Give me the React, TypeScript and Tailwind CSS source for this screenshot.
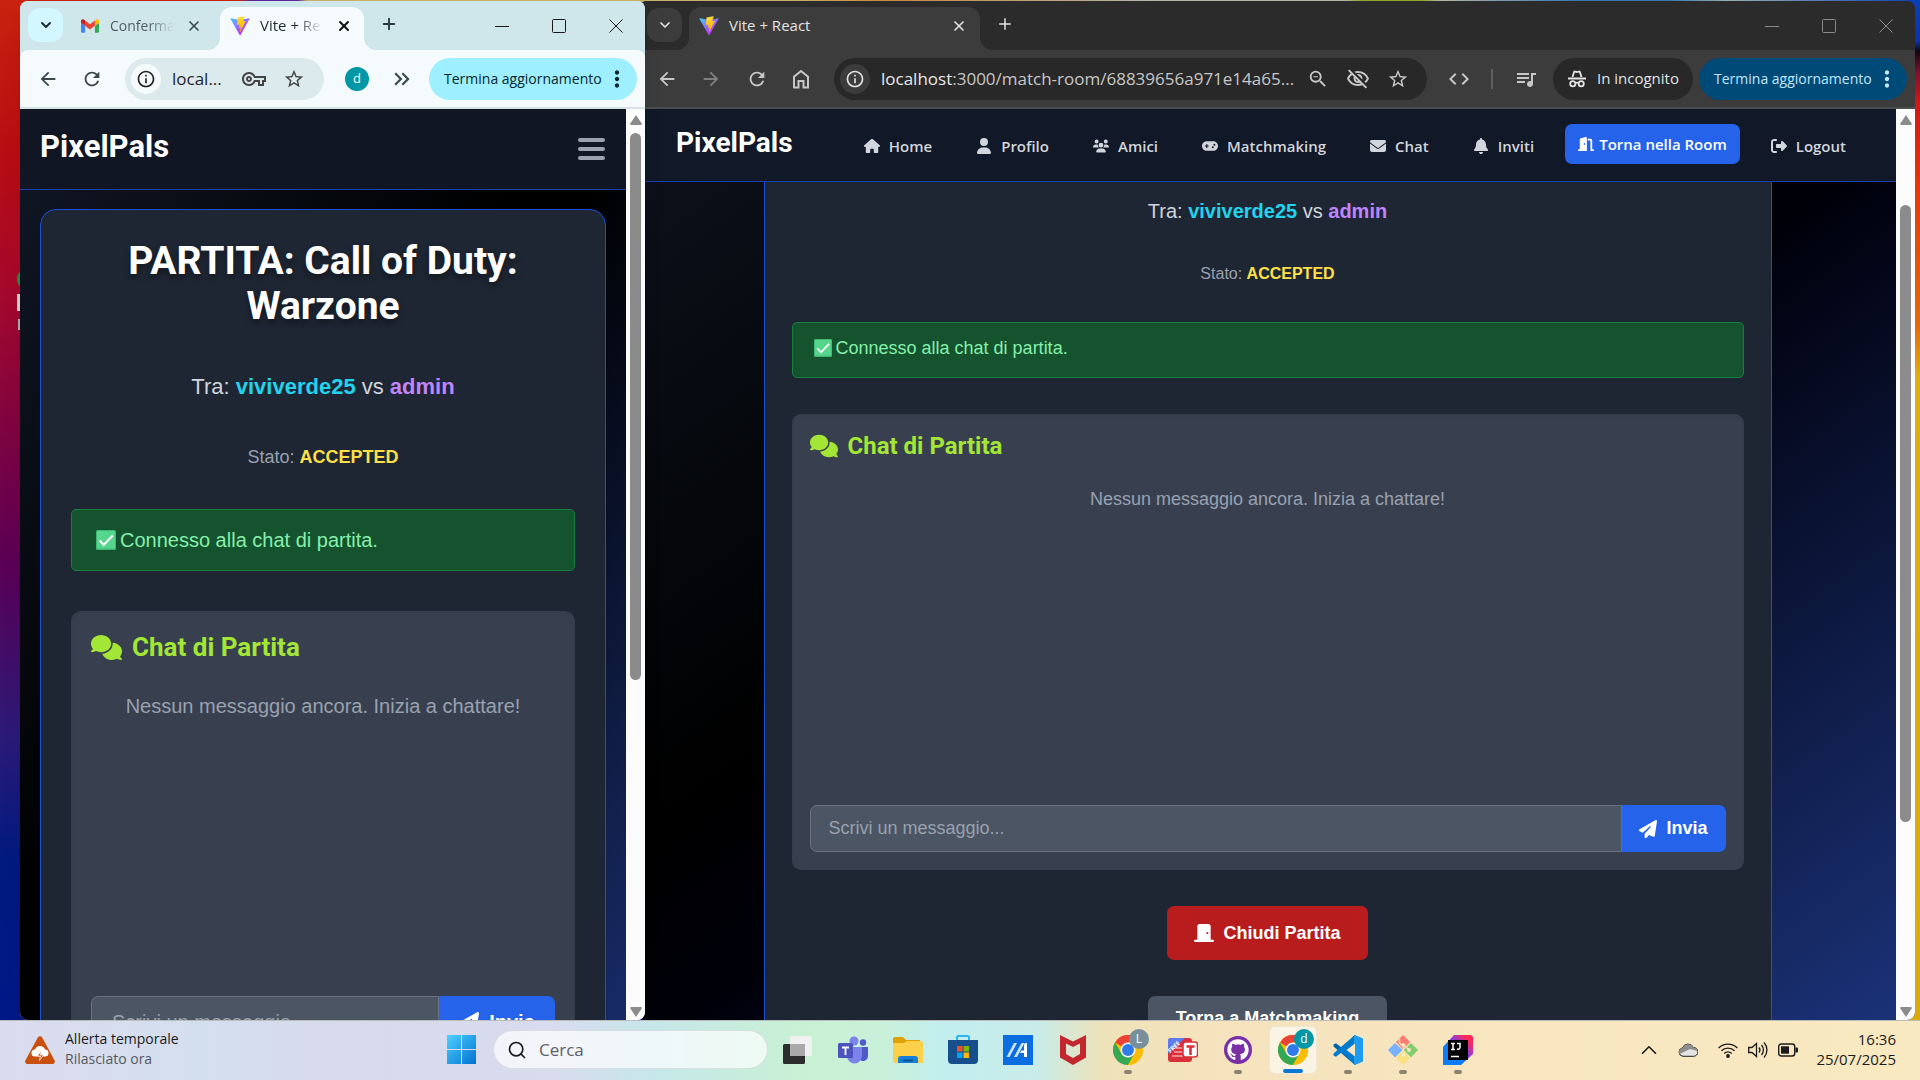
import React from "react";
import {
  FaBell,
  FaComments,
  FaDoorClosed,
  FaDoorOpen,
  FaEnvelope,
  FaGamepad,
  FaGithub,
  FaHouse,
  FaPaperPlane,
  FaRightFromBracket,
  FaUser,
  FaUsers,
} from "react-icons/fa6";
import {
  MdArrowBack,
  MdArrowForward,
  MdCode,
  MdInfoOutline,
  MdKeyboardDoubleArrowRight,
  MdMoreVert,
  MdOutlineVpnKey,
  MdOutlineVisibilityOff,
  MdQueueMusic,
  MdRefresh,
  MdStarOutline,
  MdZoomOut,
} from "react-icons/md";
import { ChevronDown, ChevronUp, Plus, Search, X } from "lucide-react";

function ViteLogo() {
  return (
    <svg viewBox="0 0 410 404" className="h-5 w-5 shrink-0" aria-hidden="true">
      <defs>
        <linearGradient id="viteA" x1="6" y1="33" x2="235" y2="344" gradientUnits="userSpaceOnUse">
          <stop stopColor="#41D1FF" />
          <stop offset="1" stopColor="#BD34FE" />
        </linearGradient>
        <linearGradient id="viteB" x1="194" y1="9" x2="236" y2="293" gradientUnits="userSpaceOnUse">
          <stop stopColor="#FFEA83" />
          <stop offset="0.08" stopColor="#FFDD35" />
          <stop offset="1" stopColor="#FFA800" />
        </linearGradient>
      </defs>
      <path
        d="M399.6 59.5 215.6 388.5c-3.8 6.8-13.6 6.8-17.4.1L10.6 59.6C6.4 52.2 12.700 43.300 21.100 44.800l184.200 32.900c1.200.2 2.400.2 3.500 0l180.400-32.900c8.400-1.500 14.700 7.300 10.400 14.700Z"
        fill="url(#viteA)"
      />
      <path
        d="M293 1.600 156.800 28.300c-2.200.4-3.900 2.300-4 4.600l-8.400 141.400c-.2 3.300 2.900 5.900 6.100 5.200l37.900-8.800c3.500-.8 6.700 2.300 6 5.900l-11.300 55.100c-.8 3.700 2.700 6.900 6.300 5.800l23.400-7.100c3.600-1.100 7.100 2.100 6.300 5.800l-17.900 86.600c-1.100 5.400 6.100 8.400 9.100 3.700l2-3.100 110.900-221.400c1.900-3.700-1.300-7.900-5.400-7.100l-39 7.500c-3.700.7-6.800-2.700-5.700-6.300l25.500-88.200c1-3.600-2.100-7-5.600-6.300Z"
        fill="url(#viteB)"
      />
    </svg>
  );
}

function GmailLogo() {
  return (
    <svg viewBox="52 42 88 66" className="h-3.5 w-[18px] shrink-0" aria-hidden="true">
      <path fill="#4285f4" d="M58 108h14V74L52 59v43c0 3.300 2.700 6 6 6" />
      <path fill="#34a853" d="M120 108h14c3.300 0 6-2.700 6-6V59l-20 15" />
      <path fill="#fbbc04" d="M120 48v26l20-15v-8c0-7.400-8.500-11.600-14.400-7.200" />
      <path fill="#ea4335" d="M72 74V48l24 18 24-18v26L96 92" />
      <path fill="#c5221f" d="M52 51v8l20 15V48l-5.600-4.200C60.500 39.400 52 43.600 52 51" />
    </svg>
  );
}

function IncognitoIcon() {
  return (
    <svg viewBox="0 0 20 20" className="h-5 w-5 shrink-0" fill="none" stroke="currentColor" aria-hidden="true">
      <path d="M5.500 8 7 3.200c.2-.6.700-.8 1.300-.6L10 3l1.700-.4c.6-.2 1.100 0 1.300.6L14.500 8" strokeWidth="1.800" />
      <path d="M1 9.500h18" strokeWidth="1.900" />
      <circle cx="5.800" cy="14.800" r="2.600" strokeWidth="1.800" />
      <circle cx="14.200" cy="14.800" r="2.600" strokeWidth="1.800" />
      <path d="M8.200 14.200c1-.7 2.600-.7 3.600 0" strokeWidth="1.600" />
    </svg>
  );
}

function WindowButtons({ dim }: { dim?: boolean }) {
  return (
    <div className={dim ? "mr-px flex text-[#8a8a8a]" : "mr-px flex text-[#1a1a1a]"}>
      <button aria-label="Riduci a icona" className="flex h-8 w-[57px] items-center justify-center">
        <svg viewBox="0 0 14 14" className="h-3.5 w-3.5" stroke="currentColor" aria-hidden="true">
          <path d="M0 7.500h14" />
        </svg>
      </button>
      <button aria-label="Ingrandisci" className="flex h-8 w-[57px] items-center justify-center">
        <svg viewBox="0 0 14 14" className="h-3.5 w-3.5" fill="none" stroke="currentColor" aria-hidden="true">
          <rect x="0.500" y="0.500" width="13" height="13" rx="1" />
        </svg>
      </button>
      <button aria-label="Chiudi" className="flex h-8 w-[57px] items-center justify-center">
        <svg viewBox="0 0 14 14" className="h-3.5 w-3.5" stroke="currentColor" aria-hidden="true">
          <path d="M.5.5l13 13M13.500.5l-13 13" />
        </svg>
      </button>
    </div>
  );
}

function Scrollbar({ thumb }: { thumb: string }) {
  return (
    <div className="flex w-[19px] shrink-0 flex-col items-center bg-[#fcfcfc] pt-1.5 pb-[3px]" aria-hidden="true">
      <svg viewBox="0 0 12 10" className="h-2.5 w-3 shrink-0" fill="#8b8b8b">
        <path d="M6 0 12 9 11 10H1L0 9Z" />
      </svg>
      <div className="flex min-h-0 w-full flex-1 flex-col items-center">
        <div className={thumb} />
      </div>
      <svg viewBox="0 0 12 10" className="h-2.5 w-3 shrink-0" fill="#8b8b8b">
        <path d="M6 10 12 1 11 0H1L0 1Z" />
      </svg>
    </div>
  );
}

type Size = "lg" | "md";

function Players({ size }: { size: Size }) {
  return (
    <>
      <p className={size === "lg" ? "text-center text-[22px] leading-8 text-gray-300" : "text-center text-[20px] leading-7 text-gray-300"}>
        Tra: <strong className="text-[#22d3ee]">viviverde25</strong> vs <strong className="text-[#c084fc]">admin</strong>
      </p>
      <p
        className={
          size === "lg"
            ? "mt-[42px] text-center text-[18px] leading-6 text-gray-400"
            : "mt-[37px] text-center text-[16px] leading-6 text-gray-400"
        }
      >
        Stato: <strong className="text-[#fde047]">ACCEPTED</strong>
      </p>
    </>
  );
}

function ConnectedAlert({ size }: { size: Size }) {
  return (
    <div
      role="status"
      className={
        size === "lg"
          ? "mt-10 flex h-[62px] items-center gap-1 rounded-[5px] border border-[#15803d] bg-[#14532d] px-6 text-[20px] text-[#86efac]"
          : "mt-9 flex h-14 items-center gap-1 rounded-[5px] border border-[#15803d] bg-[#14532d] px-[21px] pb-1 text-[18px] text-[#86efac]"
      }
    >
      <svg viewBox="0 0 20 20" className={size === "lg" ? "h-5 w-5" : "h-[18px] w-[18px]"} aria-hidden="true">
        <rect width="20" height="20" rx="1.500" fill="#3fb877" />
        <rect x="1" y="1" width="18" height="17.500" rx="1" fill="#56d68d" />
        <path d="m3.500 10.500 4.300 4.300L16.800 5.500" fill="none" stroke="#fff" strokeWidth="2" />
      </svg>
      <span>Connesso alla chat di partita.</span>
    </div>
  );
}

function ChatPanel({ size }: { size: Size }) {
  const lg = size === "lg";
  const id = lg ? "message-left" : "message-right";
  return (
    <section
      className={
        lg
          ? "mt-10 rounded-[10px] bg-[#384050] px-5 pt-5 pb-5 shadow-inner"
          : "mt-9 rounded-[9px] bg-[#384050] px-[18px] pt-[18px] pb-[18px] shadow-inner"
      }
    >
      <h2
        className={
          lg
            ? "flex items-center gap-2.5 font-[Roboto] text-[26px] leading-8 font-bold text-[#a3e635]"
            : "flex items-center gap-2.5 font-[Roboto] text-[24px] leading-7 font-bold text-[#a3e635]"
        }
      >
        <FaComments className={lg ? "h-[31px] w-[31px]" : "h-7 w-7"} />
        Chat di Partita
      </h2>
      <div className={lg ? "mt-5 h-[313px] pt-2" : "mt-[18px] h-[309px] pt-[7px]"}>
        <p className={lg ? "text-center text-[20px] leading-[30px] text-gray-400" : "text-center text-[18px] leading-7 text-gray-400"}>
          Nessun messaggio ancora. Inizia a chattare!
        </p>
      </div>
      <form className={lg ? "flex h-[52px]" : "mt-[18px] flex h-[47px]"} onSubmit={(e) => e.preventDefault()}>
        <label htmlFor={id} className="sr-only">
          Messaggio
        </label>
        <input
          id={id}
          placeholder="Scrivi un messaggio..."
          className={
            lg
              ? "min-w-0 flex-1 rounded-l-[7px] border border-gray-500 bg-[#4b5563] px-5 text-[20px] text-white placeholder:text-gray-400"
              : "min-w-0 flex-1 rounded-l-[7px] border border-gray-500 bg-[#4b5563] px-[18px] text-[18px] text-white placeholder:text-gray-400"
          }
        />
        <button
          className={
            lg
              ? "flex w-[116px] items-center justify-center gap-2.5 rounded-r-[7px] bg-[#2563eb] text-[20px] font-bold text-white"
              : "flex w-[104px] items-center justify-center gap-[9px] rounded-r-[7px] bg-[#2563eb] text-[18px] font-bold text-white"
          }
        >
          <FaPaperPlane className={lg ? "h-5 w-5" : "h-[18px] w-[18px]"} />
          Invia
        </button>
      </form>
    </section>
  );
}

const flareLeft = "pointer-events-none absolute bottom-0 -left-3 h-3 w-3";
const flareRight = "pointer-events-none absolute -right-3 bottom-0 h-3 w-3";

function LeftWindow() {
  return (
    <section className="relative z-10 flex min-h-0 min-w-0 flex-col overflow-hidden rounded-lg bg-[#cfe6eb] shadow-xl">
      <div className="flex h-[49px] shrink-0 items-end bg-[#cfe6eb] text-[#1d2b30]">
        <button aria-label="Cerca schede" className="mb-2 ml-2 flex h-[34px] w-[35px] items-center justify-center rounded-xl bg-[#d3f7ff]">
          <ChevronDown className="h-4 w-4" strokeWidth={3} />
        </button>
        <div className="flex h-[43px] w-[157px] items-center pb-1.5 pl-[18px]">
          <GmailLogo />
          <span className="ml-[11px] w-16 bg-linear-to-r from-[#4c5a5e] from-60% to-transparent bg-clip-text text-[14px] whitespace-nowrap text-transparent">
            Conferma
          </span>
          <button aria-label="Chiudi scheda" className="ml-3 text-[#3c484c]">
            <X className="h-4 w-4" strokeWidth={2.5} />
          </button>
        </div>
        <div className="relative flex h-[43px] w-36 items-center rounded-t-xl bg-[#f5fbfd] pb-1.5 pl-2.5">
          <span className={flareLeft + " bg-[radial-gradient(circle_at_0_0,transparent_12px,#f5fbfd_12px)]"} />
          <ViteLogo />
          <span className="ml-2.5 w-[62px] bg-linear-to-r from-[#1d2b30] from-60% to-transparent bg-clip-text text-[15px] whitespace-nowrap text-transparent">
            Vite + Re
          </span>
          <button aria-label="Chiudi scheda" className="ml-3.5 text-[#111]">
            <X className="h-4 w-4" strokeWidth={3} />
          </button>
          <span className={flareRight + " bg-[radial-gradient(circle_at_100%_0,transparent_12px,#f5fbfd_12px)]"} />
        </div>
        <button aria-label="Nuova scheda" className="mb-[17px] ml-4 text-[#2b3a3e]">
          <Plus className="h-[18px] w-[18px]" strokeWidth={2.5} />
        </button>
        <div className="mb-2 ml-auto flex">
          <WindowButtons />
        </div>
      </div>
      <div className="flex h-[59px] shrink-0 items-center rounded-t-lg border-b-2 border-[#d5e3e7] bg-[#f5fbfd] pr-2 pl-[17px] text-[#3a484c]">
        <button aria-label="Indietro">
          <MdArrowBack className="h-[22px] w-[22px]" />
        </button>
        <button aria-label="Ricarica" className="ml-[22px]">
          <MdRefresh className="h-[22px] w-[22px]" />
        </button>
        <div className="ml-[22px] flex h-[42px] min-w-0 flex-1 items-center rounded-full bg-[#dceaee] pr-[19px] pl-1.5">
          <span className="flex h-[30px] w-[30px] shrink-0 items-center justify-center rounded-full bg-[#f5fbfd] text-[#222]">
            <MdInfoOutline className="h-5 w-5" />
          </span>
          <span className="ml-[11px] text-[17px] text-[#1f1f1f]">local...</span>
          <MdOutlineVpnKey className="ml-auto h-6 w-6 shrink-0 text-[#444]" />
          <MdStarOutline className="ml-[17px] h-[22px] w-[22px] shrink-0 text-[#444]" />
        </div>
        <span className="ml-[21px] flex h-6 w-6 items-center justify-center rounded-full bg-[#0097a7] text-[13px] text-white">d</span>
        <MdKeyboardDoubleArrowRight className="ml-5 h-[26px] w-[26px] shrink-0" />
        <button className="ml-3.5 flex h-[42px] w-[208px] shrink-0 items-center justify-between rounded-full bg-[#9eefff] pr-[7px] pl-[15px] text-[14px] whitespace-nowrap text-[#06272e]">
          Termina aggiornamento
          <MdMoreVert className="h-[26px] w-[26px] shrink-0" />
        </button>
      </div>
      <div className="flex min-h-0 flex-1 font-['Liberation_Sans']">
        <div className="flex min-w-0 flex-1 flex-col overflow-hidden bg-[linear-gradient(to_bottom_right,#111827_0%,#000_45%,#000_52%,#1b3278_108%)]">
          <header className="flex h-[81px] shrink-0 items-center justify-between border-b border-[#1e40af] bg-[#101624] px-5">
            <a href="#" className="pb-1 font-[Roboto] text-[31px] font-bold text-white">
              PixelPals
            </a>
            <button aria-label="Menu" className="text-[#9ca3af]">
              <svg viewBox="0 0 30 30" className="h-[30px] w-[30px]" stroke="currentColor" strokeWidth="4" strokeLinecap="round" aria-hidden="true">
                <path d="M4 6h23M4 15h23M4 24h23" />
              </svg>
            </button>
          </header>
          <main className="min-h-0 flex-1 px-5 pt-[19px]">
            <div className="rounded-[16px] border border-[#1d4ed8] bg-[#1e2633] px-[30px] pt-[29px] pb-10">
              <h1 className="text-center font-[Roboto] text-[39px] leading-[45px] font-bold text-white [text-shadow:0_4px_6px_rgba(0,0,0,0.4)]">
                PARTITA: Call of Duty: Warzone
              </h1>
              <div className="mt-[42px]">
                <Players size="lg" />
              </div>
              <ConnectedAlert size="lg" />
              <ChatPanel size="lg" />
            </div>
          </main>
        </div>
        <Scrollbar thumb="mt-2 h-[62%] w-[11px] rounded-full bg-[#8b8b8b]" />
      </div>
    </section>
  );
}

const navItems = [
  { label: "Home", Icon: FaHouse },
  { label: "Profilo", Icon: FaUser },
  { label: "Amici", Icon: FaUsers },
  { label: "Matchmaking", Icon: FaGamepad },
  { label: "Chat", Icon: FaEnvelope },
  { label: "Inviti", Icon: FaBell },
];

function RightWindow() {
  return (
    <section className="relative -ml-1.5 flex min-h-0 min-w-0 flex-col overflow-hidden rounded-lg bg-[#2b2b2b]">
      <div className="flex h-[49px] shrink-0 items-end bg-[#2b2b2b] text-[#e3e3e3]">
        <button aria-label="Cerca schede" className="mb-2 ml-2 flex h-[34px] w-[35px] items-center justify-center rounded-xl bg-[#3c3c3c]">
          <ChevronDown className="h-4 w-4" strokeWidth={2.5} />
        </button>
        <div className="relative ml-[7px] flex h-[43px] w-[291px] items-center rounded-t-xl bg-[#3c3c3c] pr-[13px] pb-1.5 pl-2.5">
          <span className={flareLeft + " bg-[radial-gradient(circle_at_0_0,transparent_12px,#3c3c3c_12px)]"} />
          <ViteLogo />
          <span className="ml-2.5 text-[15px] whitespace-nowrap">Vite + React</span>
          <button aria-label="Chiudi scheda" className="ml-auto">
            <X className="h-4 w-4" strokeWidth={2.5} />
          </button>
          <span className={flareRight + " bg-[radial-gradient(circle_at_100%_0,transparent_12px,#3c3c3c_12px)]"} />
        </div>
        <button aria-label="Nuova scheda" className="mb-[17px] ml-4">
          <Plus className="h-[18px] w-[18px]" strokeWidth={2} />
        </button>
        <div className="mb-2 ml-auto flex">
          <WindowButtons dim />
        </div>
      </div>
      <div className="flex h-[59px] shrink-0 items-center border-b-2 border-[#4a4e4e] bg-[#3c3c3c] pr-2 pl-[17px] text-[#c7c7c7]">
        <button aria-label="Indietro">
          <MdArrowBack className="h-[22px] w-[22px]" />
        </button>
        <button aria-label="Avanti" className="ml-[22px] text-[#808080]">
          <MdArrowForward className="h-[22px] w-[22px]" />
        </button>
        <button aria-label="Ricarica" className="ml-6">
          <MdRefresh className="h-[22px] w-[22px]" />
        </button>
        <button aria-label="Pagina iniziale" className="ml-[22px]">
          <svg viewBox="0 0 22 22" className="h-[22px] w-[22px]" fill="none" stroke="currentColor" strokeWidth="2" aria-hidden="true">
            <path d="M4 19.500V8.800L11 3l7 5.800v10.700h-4.500v-6.500h-5v6.500Z" />
          </svg>
        </button>
        <div className="ml-[22px] flex h-[42px] min-w-0 flex-1 items-center rounded-full bg-[#282828] pr-[18px] pl-1.5">
          <span className="flex h-[30px] w-[30px] shrink-0 items-center justify-center rounded-full bg-[#3c3c3c] text-[#e3e3e3]">
            <MdInfoOutline className="h-5 w-5" />
          </span>
          <span className="ml-[11px] text-[17px] whitespace-nowrap text-[#c7c7c7]">
            <span className="text-[#e8e8e8]">localhost</span>:3000/match-room/68839656a971e14a65...
          </span>
          <MdZoomOut className="ml-auto h-[22px] w-[22px] shrink-0" />
          <MdOutlineVisibilityOff className="ml-[17px] h-6 w-6 shrink-0" />
          <MdStarOutline className="ml-[17px] h-[22px] w-[22px] shrink-0" />
        </div>
        <MdCode className="ml-5 h-6 w-6 shrink-0" />
        <span className="ml-5 h-5 w-0.5 bg-[#5e5e5e]" />
        <MdQueueMusic className="ml-[21px] h-6 w-6 shrink-0" />
        <span className="ml-[15px] flex h-[42px] w-[140px] shrink-0 items-center gap-2.5 rounded-full bg-[#282828] pl-3.5 text-[15px] whitespace-nowrap text-[#e3e3e3]">
          <IncognitoIcon />
          In incognito
        </span>
        <button className="ml-1.5 flex h-[42px] w-[208px] shrink-0 items-center justify-between rounded-full bg-[#004a77] pr-[7px] pl-[15px] text-[14px] whitespace-nowrap text-[#c2e7ff]">
          Termina aggiornamento
          <MdMoreVert className="h-[26px] w-[26px] shrink-0" />
        </button>
      </div>
      <div className="flex min-h-0 flex-1 font-['Liberation_Sans']">
        <div className="flex min-w-0 flex-1 flex-col overflow-hidden bg-[linear-gradient(to_bottom_right,#0d121d_0%,#000_40%,#00000a_52%,#1b3278_100%)]">
          <header className="flex h-[73px] shrink-0 items-center border-b border-[#1e40af] bg-[#111827] px-[37px]">
            <a href="#" className="pb-1 font-[Roboto] text-[28px] font-bold text-white">
              PixelPals
            </a>
            <nav className="ml-auto flex items-center gap-[18px] pt-0.5 font-['Open_Sans'] text-[15px] font-semibold text-gray-300">
              {navItems.map(({ label, Icon }) => (
                <a key={label} href="#" className="flex items-center gap-[9px] px-[13px]">
                  <Icon className="h-4 w-auto" />
                  {label}
                </a>
              ))}
              <button className="mb-1 flex h-10 items-center gap-[5px] rounded-[7px] bg-[#2563eb] px-[13px] font-semibold text-white">
                <FaDoorOpen className="h-4 w-auto" />
                Torna nella Room
              </button>
              <button className="flex items-center gap-[9px] px-[13px] font-semibold">
                <FaRightFromBracket className="h-4 w-auto" />
                Logout
              </button>
            </nav>
          </header>
          <main className="mx-auto min-h-0 w-full max-w-[1008px] flex-1 overflow-hidden border-x border-[#1d4ed8] bg-[#1e2633] px-[27px] pt-[15px]">
            <Players size="md" />
            <ConnectedAlert size="md" />
            <ChatPanel size="md" />
            <div className="mt-9 flex flex-col items-center gap-9">
              <button className="flex h-[54px] items-center gap-[9px] rounded-[7px] bg-[#b91c1c] px-[27px] text-[18px] font-bold text-white">
                <FaDoorClosed className="h-[18px] w-5" />
                Chiudi Partita
              </button>
              <button className="h-[45px] rounded-[7px] bg-[#4b5563] px-7 text-[18px] font-bold text-white">Torna a Matchmaking</button>
            </div>
          </main>
        </div>
        <Scrollbar thumb="mt-20 h-[70%] w-[11px] rounded-full bg-[#8b8b8b]" />
      </div>
    </section>
  );
}

function ChromeIcon({ letter, badge }: { letter: string; badge: string }) {
  return (
    <span className="relative">
      <svg viewBox="0 0 30 30" className="h-[30px] w-[30px]" aria-hidden="true">
        <circle cx="15" cy="15" r="15" fill="#fbbc04" />
        <path d="M15 15 2 7.500A15 15 0 0 1 28 7.500H15Z" fill="#ea4335" />
        <path d="M2 7.500A15 15 0 0 0 15 30l6.500-11.200L15 15 8.500 18.800Z" fill="#34a853" />
        <path d="M28 7.500A15 15 0 0 1 15 30l6.500-11.200L15 7.500Z" fill="#fbbc04" />
        <circle cx="15" cy="15" r="7.500" fill="#fff" />
        <circle cx="15" cy="15" r="6" fill="#2f7bea" />
      </svg>
      <span className={badge}>{letter}</span>
    </span>
  );
}

const apps: { name: string; state: "none" | "open" | "active"; icon: React.ReactNode }[] = [
  {
    name: "Visualizzazione attività",
    state: "none",
    icon: (
      <svg viewBox="0 0 30 30" className="h-[30px] w-[30px]">
        <rect x="0" y="9" width="22" height="20" rx="1.500" fill="#2d2d2d" />
        <rect x="7" y="1" width="22" height="20" rx="1.500" fill="#f1f1f1" />
        <path d="M7 9h15v12H8.500L7 19.500Z" fill="#a9a9a9" />
      </svg>
    ),
  },
  {
    name: "Teams",
    state: "none",
    icon: (
      <svg viewBox="0 0 30 30" className="h-[30px] w-[30px]">
        <circle cx="25" cy="7.500" r="3.200" fill="#5059c9" />
        <path d="M20 12h10v9a5 5 0 0 1-8 4Z" fill="#5059c9" />
        <circle cx="16" cy="6" r="4.500" fill="#7b83eb" />
        <path d="M9 12h15v9a7.500 7.500 0 0 1-15 0Z" fill="#7b83eb" />
        <rect x="0" y="8" width="15" height="15" rx="1.500" fill="#4b53bc" />
        <path d="M4 12.500h7M7.500 12.500v7.500" stroke="#fff" strokeWidth="1.800" />
      </svg>
    ),
  },
  {
    name: "Esplora file",
    state: "none",
    icon: (
      <svg viewBox="0 0 30 30" className="h-[30px] w-[30px]">
        <path d="M0 4a2 2 0 0 1 2-2h8l3 3h14v6H0Z" fill="#e0a008" />
        <path d="M0 8h11l3-2h14a2 2 0 0 1 2 2v20H2a2 2 0 0 1-2-2Z" fill="#fdd04a" />
        <path d="M5 24a3 3 0 0 1 3-3h14a3 3 0 0 1 3 3v4H5Z" fill="#1480d8" />
        <path d="M10 25.500h10" stroke="#0b4f91" strokeWidth="2" />
      </svg>
    ),
  },
  {
    name: "Microsoft Store",
    state: "none",
    icon: (
      <svg viewBox="0 0 30 30" className="h-[30px] w-[30px]">
        <path d="M9 6V2.500A1.500 1.500 0 0 1 10.500 1h9A1.500 1.500 0 0 1 21 2.500V6" fill="none" stroke="#29b6f0" strokeWidth="2" />
        <path d="M0 5h30v20a4 4 0 0 1-4 4H4a4 4 0 0 1-4-4Z" fill="#174f8c" />
        <path d="M9 11h5.500v5.500H9Z" fill="#f25022" />
        <path d="M15.500 11H21v5.500h-5.500Z" fill="#7fba00" />
        <path d="M9 17.500h5.500V23H9Z" fill="#00a4ef" />
        <path d="M15.500 17.500H21V23h-5.500Z" fill="#ffb900" />
      </svg>
    ),
  },
  {
    name: "MyAsus",
    state: "none",
    icon: (
      <svg viewBox="0 0 30 30" className="h-[30px] w-[30px]">
        <rect width="30" height="30" fill="#0a6de0" />
        <path d="M3.500 22 11 8h3L6.500 22ZM11 22l7.500-14h3L14 22Z" fill="#cfe4ff" />
        <path d="M22 8h2v14h-3v-4h-4l1.500-2.500H21V10Z" fill="#fff" />
      </svg>
    ),
  },
  {
    name: "McAfee",
    state: "none",
    icon: (
      <svg viewBox="0 0 30 30" className="h-[30px] w-[30px]">
        <path d="M2 0 15 6.500 28 0v22.500L15 30 2 22.500Zm6 8.500V19l7 4 7-4V8.500L15 12Z" fill="#c2282d" fillRule="evenodd" />
      </svg>
    ),
  },
  {
    name: "Chrome L",
    state: "open",
    icon: (
      <ChromeIcon
        letter="L"
        badge="absolute -top-1.5 -right-1.5 flex h-5 w-5 items-center justify-center rounded-full bg-[#78909c] text-[12px] text-white"
      />
    ),
  },
  {
    name: "PDF gratuito",
    state: "none",
    icon: (
      <svg viewBox="0 0 30 30" className="h-[30px] w-[30px]">
        <rect x="0" y="3" width="24" height="24" rx="3" fill="#d9303a" />
        <path d="M8 13h8M6 17h10M4 21h13" stroke="#f6a5a9" strokeWidth="1.300" />
        <path d="M0 6a3 3 0 0 1 3-3h14L0 19Z" fill="#5b7bef" />
        <text x="-1" y="14" transform="rotate(-43 6 12)" fontSize="6" fontWeight="700" fill="#fff" fontFamily="Open Sans">
          FREE
        </text>
        <rect x="15" y="7" width="14.500" height="15" rx="2.500" fill="#fff" stroke="#d9303a" strokeWidth="1.500" />
        <path d="M18.500 11.500h8M22.500 11.500v8.500" stroke="#d9303a" strokeWidth="2.600" />
      </svg>
    ),
  },
  {
    name: "GitHub Desktop",
    state: "open",
    icon: (
      <span className="flex h-[28px] w-[28px] items-center justify-center rounded-full bg-[#7a2fa6] text-white">
        <FaGithub className="h-[22px] w-[22px]" />
      </span>
    ),
  },
  {
    name: "Chrome d",
    state: "active",
    icon: (
      <ChromeIcon
        letter="d"
        badge="absolute -top-1.5 -right-1.5 flex h-5 w-5 items-center justify-center rounded-full bg-[#0097a7] text-[12px] text-white"
      />
    ),
  },
  {
    name: "Visual Studio Code",
    state: "open",
    icon: (
      <svg viewBox="0 0 30 30" className="h-[30px] w-[30px]">
        <path d="M22 0 8.500 12.500 3 8.300.5 9.500v2L22 30Z" fill="#0065a9" />
        <path d="M22 30 8.500 17.500 3 21.700.5 20.500v-2L22 0Z" fill="#007acc" />
        <path d="m22 0 8 3.500v23L22 30l-1-1V1Z" fill="#1f9cf0" />
        <path d="M22 8.500v13L13.500 15Z" fill="#f7e6bf" />
      </svg>
    ),
  },
  {
    name: "Git",
    state: "open",
    icon: (
      <svg viewBox="0 0 30 30" className="h-[30px] w-[30px]">
        <path d="M15 0 22 7l-7 7.500L8 7Z" fill="#ff7b72" />
        <path d="m7 8 7.500 7L7 22.500 0 15Z" fill="#79b0ff" />
        <path d="m23 8 7 7-7 7.500-7.500-7.500Z" fill="#85cc6f" />
        <path d="m15 15.500 7 7.500-7 7-7-7Z" fill="#fbe180" />
        <path d="M11.500 4v4l4 4v10M15.500 10l6 5" stroke="#f7e6bf" strokeWidth="1.500" fill="none" />
        <circle cx="15.500" cy="20" r="2" fill="#f7e6bf" />
        <circle cx="15.500" cy="10" r="2" fill="#f7e6bf" />
        <circle cx="21" cy="15" r="2" fill="#f7e6bf" />
      </svg>
    ),
  },
  {
    name: "IntelliJ IDEA",
    state: "open",
    icon: (
      <svg viewBox="0 0 30 30" className="h-[30px] w-[30px]">
        <defs>
          <linearGradient id="ideaA" x1="30" y1="0" x2="0" y2="30" gradientUnits="userSpaceOnUse">
            <stop stopColor="#fe2857" />
            <stop offset="0.150" stopColor="#fe2857" />
            <stop offset="0.450" stopColor="#7a3ff0" />
            <stop offset="0.600" stopColor="#087cfa" />
          </linearGradient>
        </defs>
        <path d="M11 0h17l2 2v17L18 30H0V12Z" fill="url(#ideaA)" />
        <rect x="5" y="5" width="20" height="20" fill="#000" />
        <path d="M8 8.500h4M10 8.500v6M8 14.500h4M14 8.500h3v4a2 2 0 0 1-3 1.500" stroke="#fff" strokeWidth="1.500" fill="none" />
        <path d="M8 21.500h8" stroke="#fff" strokeWidth="1.500" />
      </svg>
    ),
  },
];

function Taskbar() {
  return (
    <footer className="relative z-20 grid h-[60px] shrink-0 grid-cols-[1fr_auto_1fr] items-center border-t border-[#b9bcb8] bg-[linear-gradient(to_right,#dadbef_0%,#d4dfee_10%,#d8d9ed_20%,#d8dcee_29%,#c6e7ea_34%,#c8f1d3_42%,#c9f0d9_46%,#c2eeee_49%,#c8ecea_54%,#eee2b8_57.500%,#f5e3bd_63%,#f7e6c0_80%,#f9e9c0_100%)] pb-0.5 text-[#1b1b1b]">
      <button className="flex items-center gap-2.5 pl-[25px] text-left text-[14px] leading-5">
        <svg viewBox="0 0 30 28" className="h-7 w-[30px]" aria-hidden="true">
          <path d="M12.800 1.500a2.500 2.500 0 0 1 4.400 0l12.300 22.700a2.500 2.500 0 0 1-2.200 3.800H2.700a2.500 2.500 0 0 1-2.200-3.800Z" fill="#c9500f" />
          <path d="M10 20.500a3.500 3.500 0 0 1 0-7 5.300 5.300 0 0 1 10 0 3.500 3.500 0 0 1 0 7Z" fill="#fff" />
          <path d="m16 15-3.500 5h3l-1 4.500 4-5.500h-3Z" fill="#c9500f" stroke="#fff" strokeWidth="0.700" />
        </svg>
        <span className="flex flex-col pb-0.5">
          <span>Allerta temporale</span>
          <span className="text-[#56585f]">Rilasciato ora</span>
        </span>
      </button>
      <div className="flex items-center pl-[9px]">
        <button aria-label="Start">
          <svg viewBox="0 0 29 29" className="h-[29px] w-[29px]" aria-hidden="true">
            <defs>
              <linearGradient id="winA" x1="0" y1="0" x2="29" y2="29" gradientUnits="userSpaceOnUse">
                <stop stopColor="#4fd2ff" />
                <stop offset="1" stopColor="#0070d0" />
              </linearGradient>
            </defs>
            <path d="M0 0h14v14H0ZM15 0h14v14H15ZM0 15h14v14H0ZM15 15h14v14H15Z" fill="url(#winA)" />
          </svg>
        </button>
        <label className="ml-[17px] flex h-[39px] w-[275px] items-center rounded-full border border-black/10 bg-white/70 pl-[13px]">
          <Search className="h-5 w-5 shrink-0" strokeWidth={2} />
          <span className="sr-only">Cerca</span>
          <input placeholder="Cerca" className="ml-3 w-full min-w-0 bg-transparent text-[17px] placeholder:text-[#5d5f63]" />
        </label>
        <div className="ml-1.5 flex gap-[7px]">
          {apps.map(({ name, state, icon }) => (
            <button
              key={name}
              aria-label={name}
              className={
                state === "active"
                  ? "relative flex h-12 w-12 items-center justify-center rounded-md border border-black/5 bg-white/60"
                  : "relative flex h-12 w-12 items-center justify-center rounded-md"
              }
            >
              {icon}
              {state === "open" && <span className="absolute bottom-0 h-1 w-2 rounded-full bg-[#8b8370]" />}
              {state === "active" && <span className="absolute bottom-0 h-1 w-5 rounded-full bg-[#0a78d4]" />}
            </button>
          ))}
        </div>
      </div>
      <div className="flex items-center justify-end pr-6">
        <ChevronUp className="h-[26px] w-[26px]" strokeWidth={1.5} />
        <svg viewBox="0 0 20 14" className="ml-4 h-3.5 w-5" aria-hidden="true">
          <path d="M5 13.300a4.300 4.300 0 0 1-.5-8.500 6 6 0 0 1 11-.3 4.400 4.400 0 0 1 0 8.800Z" fill="#e4e4e4" stroke="#222" />
          <path d="M4.500 5a6 6 0 0 1 11-.5c2 .2 3.500 2 3.800 3.500L12 6 1.500 11C.3 8.500 1.500 5.500 4.500 5" fill="#8d8d8d" />
        </svg>
        <svg viewBox="0 0 20 16" className="ml-5 h-4 w-5" fill="none" stroke="currentColor" strokeWidth="1.400" aria-hidden="true">
          <path d="M.7 6a13 13 0 0 1 18.600 0M3.500 8.800a9.200 9.200 0 0 1 13 0M6.300 11.400a5.300 5.300 0 0 1 7.400 0" />
          <circle cx="10" cy="14" r="1.200" fill="currentColor" />
        </svg>
        <svg viewBox="0 0 20 18" className="ml-2.5 h-[18px] w-5" fill="none" stroke="currentColor" strokeWidth="1.300" aria-hidden="true">
          <path d="M.7 6.500H4l4.500-4v13l-4.500-4H.7ZM11 6.500a4 4 0 0 1 0 5M13.500 4a7.500 7.500 0 0 1 0 10M16 1.500a11 11 0 0 1 0 15" />
        </svg>
        <svg viewBox="0 0 20 14" className="ml-2.5 h-3.5 w-5" aria-hidden="true">
          <rect x="0.700" y="1" width="16" height="12" rx="2.500" fill="none" stroke="#1b1b1b" strokeWidth="1.400" />
          <rect x="3" y="3.300" width="8" height="7.400" fill="#1b1b1b" />
          <path d="M17.500 4.500h1.500a1 1 0 0 1 1 1v3a1 1 0 0 1-1 1h-1.500Z" fill="#1b1b1b" />
        </svg>
        <div className="ml-[18px] pb-0.5 text-right text-[15px] leading-5">
          <p>16:36</p>
          <p>25/07/2025</p>
        </div>
      </div>
    </footer>
  );
}

export default function App() {
  return (
    <div className="flex h-screen flex-col overflow-hidden bg-[linear-gradient(to_bottom,#c9220f_0%,#b80d12_14%,#a5082c_27%,#5b0055_52%,#2c1a78_68%,#001a80_80%,#00188a_100%)] font-['Open_Sans',sans-serif]">
      <div className="relative grid min-h-0 flex-1 grid-cols-[625fr_1270fr] grid-rows-[minmax(0,1fr)] pt-px pr-[5px] pl-5">
        <div className="absolute inset-x-0 top-0 h-2 bg-[linear-gradient(to_right,#c9220f_0%,#c9220f_12.500%,#5b2a9a_13%,#5b2a9a_15.500%,#c9b068_16%,#c9b068_41%,#c98a40_46%,#b5b5a8_60%,#b5b5a8_70%,#93a526_71%,#93a526_74%,#b5b5a8_75%,#3a78b0_82%,#3a78b0_87%,#9ab0b0_90%,#0b3fb5_100%)]" />
        <div className="absolute inset-y-0 right-0 w-2.5 bg-[linear-gradient(to_bottom,#0b3fb5_0%,#0a34a8_4%,#12060f_5%,#7a1030_7%,#d01818_10%,#e8350a_18%,#e56a0a_32%,#dcb010_37%,#d9ab0a_100%)]" />
        <div className="absolute top-[268px] left-[17px] h-[22px] w-[22px] rounded-full bg-[#2e8b45]" />
        <div className="absolute top-[294px] left-[17px] h-[17px] w-2 bg-[#d5d5d5]" />
        <div className="absolute top-[319px] left-[18px] h-[11px] w-2 bg-[#b9a9b0]" />
        <LeftWindow />
        <RightWindow />
      </div>
      <Taskbar />
    </div>
  );
}
